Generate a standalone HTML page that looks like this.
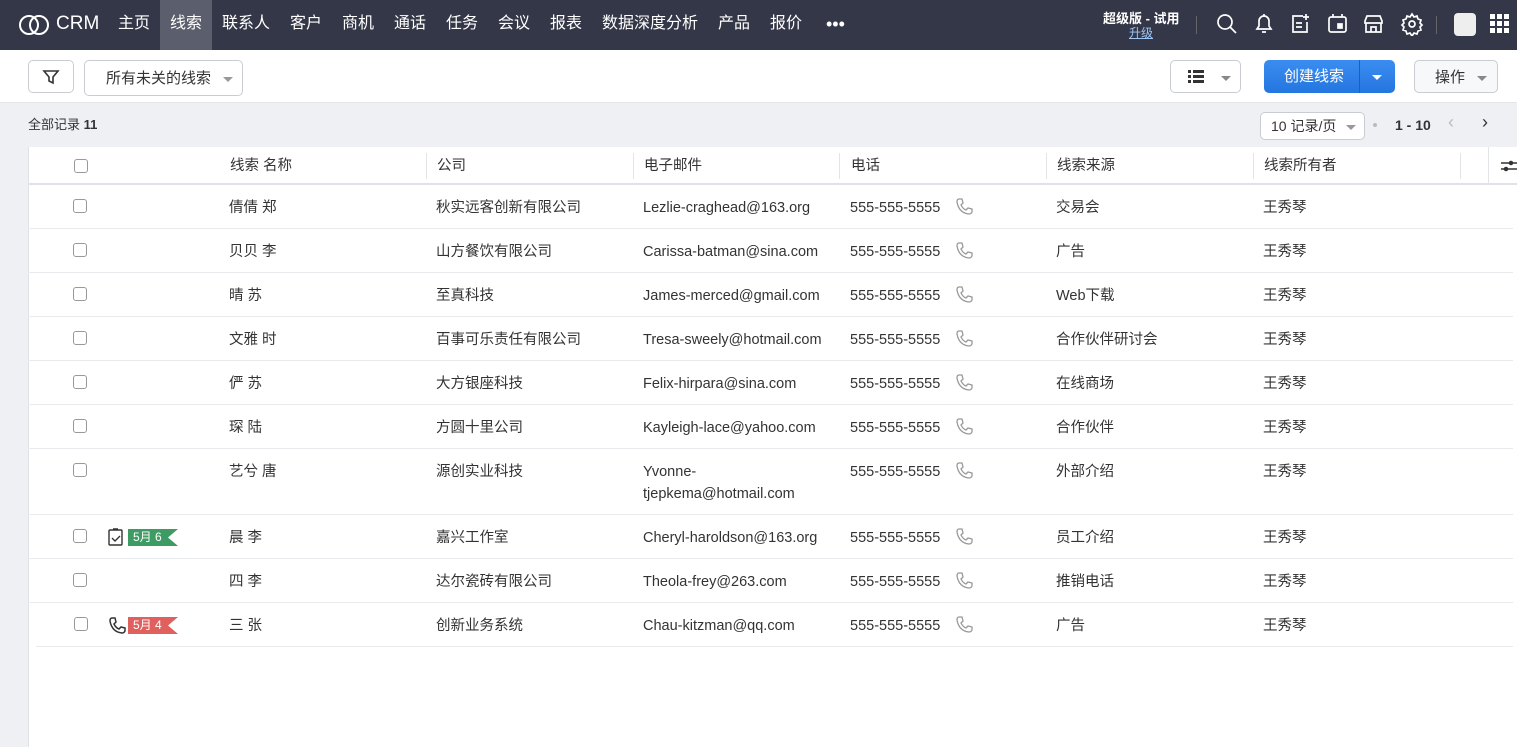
<!DOCTYPE html>
<html><head><meta charset="utf-8"><style>
*{box-sizing:border-box;margin:0;padding:0}
body{width:1517px;height:743px;overflow:hidden;background:#eef0f3;font-family:"Liberation Sans","Noto Sans CJK SC",sans-serif;color:#333;font-size:14px;position:relative}
.top{position:absolute;left:0;top:0;width:1517px;height:50px;background:#343747;color:#fff}
.nav{position:absolute;top:0;height:50px;line-height:48px;font-size:16px}
.abs{position:absolute}
.tb{position:absolute;left:0;top:50px;width:1517px;height:53px;background:#fff;border-bottom:1px solid #e3e5e8}
.btn{position:absolute;border:1px solid #c9ccd1;border-radius:5px;background:#fff}
.caret{position:absolute;width:0;height:0;border-left:5px solid transparent;border-right:5px solid transparent;border-top:5px solid #777}
.card{position:absolute;left:28px;top:147px;width:1489px;height:600px;background:#fff;border-left:1px solid #e0e2e6}
.row{position:absolute;left:0;width:1485px;border-bottom:1px solid #e8eaed}
.cb{position:absolute;left:45px;width:14px;height:14px;border:1.5px solid #999;border-radius:3px}
.c{position:absolute;font-size:14.5px;color:#333;white-space:nowrap;line-height:22px}
.hd{position:absolute;top:0;left:0;width:1489px;height:38px;border-bottom:2px solid #dfe2e6}
.sep{position:absolute;top:6px;width:1px;height:26px;background:#e2e4e8}
.tag{position:absolute;height:17px;line-height:17px;color:#fff;font-size:12px;padding-left:5px;width:50px}
</style></head><body>
<div class="top">
<svg class="abs" style="left:18px;top:13px" width="32" height="24" viewBox="0 0 32 24"><g fill="none" stroke="#fff" stroke-width="2"><circle cx="11" cy="12" r="9"/><circle cx="21" cy="12" r="9"/></g></svg>
<div class="nav" style="left:56px;font-size:19px">CRM</div>
<div class="abs" style="left:160px;top:0;width:52px;height:50px;background:#5b5e6c"></div>
<div class="nav" style="left:118px">主页</div>
<div class="nav" style="left:170px">线索</div>
<div class="nav" style="left:222px">联系人</div>
<div class="nav" style="left:290px">客户</div>
<div class="nav" style="left:342px">商机</div>
<div class="nav" style="left:394px">通话</div>
<div class="nav" style="left:446px">任务</div>
<div class="nav" style="left:498px">会议</div>
<div class="nav" style="left:550px">报表</div>
<div class="nav" style="left:602px">数据深度分析</div>
<div class="nav" style="left:718px">产品</div>
<div class="nav" style="left:770px">报价</div>
<div class="nav" style="left:826px;font-size:18px">•••</div>
<div class="abs" style="left:1103px;top:8px;font-size:13px;font-weight:bold">超级版 - 试用</div>
<div class="abs" style="left:1129px;top:24px;font-size:12px;color:#9cc5f5;text-decoration:underline">升级</div>
<div class="abs" style="left:1196px;top:16px;width:1px;height:18px;background:#666"></div>
<svg class="abs" style="left:1215px;top:12px" width="24" height="24" fill="none" stroke="#fff" stroke-width="1.7"><circle cx="10" cy="10" r="7"/><path d="M15 15l6 6"/></svg>
<svg class="abs" style="left:1253px;top:12px" width="22" height="24" fill="none" stroke="#fff" stroke-width="1.7"><path d="M4 17h14l-2-3v-5a5 5 0 0 0-10 0v5z M9 20h4 M11 2v2"/></svg>
<svg class="abs" style="left:1289px;top:12px" width="24" height="24" fill="none" stroke="#fff" stroke-width="1.7"><path d="M14 4H4v16h14V10 M7 11h6 M7 15h6 M17 2v6 M14 5h6"/></svg>
<svg class="abs" style="left:1326px;top:12px" width="24" height="24" fill="none" stroke="#fff" stroke-width="1.7"><rect x="3" y="5" width="17" height="15" rx="2"/><path d="M7 2v3 M16 2v3"/><rect x="12" y="12" width="4" height="4" fill="#fff"/></svg>
<svg class="abs" style="left:1362px;top:12px" width="24" height="24" fill="none" stroke="#fff" stroke-width="1.7"><path d="M3 9l2-5h13l2 5v2H3z M4 11v9h15v-9 M9 20v-5h5v5"/></svg>
<svg class="abs" style="left:1400px;top:12px" width="24" height="24" fill="none" stroke="#fff" stroke-width="1.7"><circle cx="12" cy="12" r="3"/><path d="M12 2l2 3 3-1 1 3 3 1-1 3 2 2-2 2 1 3-3 1-1 3-3-1-2 3-2-3-3 1-1-3-3-1 1-3-2-2 2-2-1-3 3-1 1-3 3 1z"/></svg>
<div class="abs" style="left:1436px;top:16px;width:1px;height:18px;background:#666"></div>
<div class="abs" style="left:1454px;top:13px;width:22px;height:23px;background:#eee;border-radius:4px"></div>
<svg class="abs" style="left:1490px;top:14px" width="20" height="20" fill="#fff"><rect x="0" y="0" width="5" height="5"/><rect x="7" y="0" width="5" height="5"/><rect x="14" y="0" width="5" height="5"/><rect x="0" y="7" width="5" height="5"/><rect x="7" y="7" width="5" height="5"/><rect x="14" y="7" width="5" height="5"/><rect x="0" y="14" width="5" height="5"/><rect x="7" y="14" width="5" height="5"/><rect x="14" y="14" width="5" height="5"/></svg>
</div>
<div class="tb">
<div class="btn" style="left:28px;top:10px;width:46px;height:33px"><svg class="abs" style="left:13px;top:8px" width="18" height="16" fill="none" stroke="#333" stroke-width="1.6"><path d="M2 2h14l-5 6v6l-4-2V8z"/></svg></div>
<div class="btn" style="left:84px;top:10px;width:159px;height:36px"><span class="abs" style="left:21px;top:7px;font-size:15px;line-height:22px">所有未关的线索</span><div class="caret" style="left:138px;top:16px;border-top-color:#999"></div></div>
<div class="btn" style="left:1170px;top:10px;width:71px;height:33px"><svg class="abs" style="left:17px;top:9px" width="16" height="13" fill="#333"><rect x="0" y="0" width="3" height="3"/><rect x="5" y="0" width="11" height="3"/><rect x="0" y="5" width="3" height="3"/><rect x="5" y="5" width="11" height="3"/><rect x="0" y="10" width="3" height="3"/><rect x="5" y="10" width="11" height="3"/></svg><div class="caret" style="left:50px;top:15px;border-top-color:#888"></div></div>
<div class="abs" style="left:1264px;top:10px;width:131px;height:33px;background:linear-gradient(#3a8df0,#2476e0);border-radius:5px;color:#fff"><span class="abs" style="left:20px;top:6px;font-size:15px;line-height:22px">创建线索</span><div class="abs" style="left:95px;top:0;width:1px;height:33px;background:#1b5fb8"></div><div class="caret" style="left:108px;top:15px;border-top-color:#fff"></div></div>
<div class="btn" style="left:1414px;top:10px;width:84px;height:33px;background:#f7f8f9"><span class="abs" style="left:20px;top:6px;font-size:15px;line-height:22px">操作</span><div class="caret" style="left:62px;top:15px;border-top-color:#888"></div></div>
</div>
<div class="abs" style="left:28px;top:115px;font-size:13px;line-height:20px">全部记录 <b>11</b></div>
<div class="btn" style="left:1260px;top:112px;width:105px;height:28px"><span class="abs" style="left:10px;top:3px;font-size:14px;line-height:20px">10 记录/页</span><div class="caret" style="left:85px;top:12px;border-top-color:#999"></div></div>
<div class="abs" style="left:1373px;top:123px;width:4px;height:4px;border-radius:2px;background:#bbb"></div>
<div class="abs" style="left:1395px;top:115px;font-size:14px;font-weight:bold;line-height:20px">1 - 10</div>
<div class="abs" style="left:1448px;top:112px;color:#bbb;font-size:18px">&lsaquo;</div>
<div class="abs" style="left:1482px;top:112px;color:#333;font-size:18px">&rsaquo;</div>
<div class="card">
<div class="hd">
<div class="cb" style="top:12px"></div>
<div class="c" style="left:201px;top:8px">线索 名称</div>
<div class="sep" style="left:397px"></div><div class="c" style="left:408px;top:8px">公司</div>
<div class="sep" style="left:604px"></div><div class="c" style="left:615px;top:8px">电子邮件</div>
<div class="sep" style="left:810px"></div><div class="c" style="left:822px;top:8px">电话</div>
<div class="sep" style="left:1017px"></div><div class="c" style="left:1028px;top:8px">线索来源</div>
<div class="sep" style="left:1224px"></div><div class="c" style="left:1235px;top:8px">线索所有者</div>
<div class="sep" style="left:1431px"></div>
<div class="abs" style="left:1459px;top:0;width:1px;height:38px;background:#e2e4e8"></div>
<svg class="abs" style="left:1472px;top:13px" width="16" height="12" stroke="#333" stroke-width="1.5"><path d="M0 3h16 M0 9h16"/><circle cx="10" cy="3" r="1.5" fill="#333"/><circle cx="5" cy="9" r="1.5" fill="#333"/></svg>
</div>
</div>
<div id="rows"></div>
<script>
var d=[["倩倩 郑","秋实远客创新有限公司","Lezlie-craghead@163.org","交易会"],["贝贝 李","山方餐饮有限公司","Carissa-batman@sina.com","广告"],["晴 苏","至真科技","James-merced@gmail.com","Web下载"],["文雅 时","百事可乐责任有限公司","Tresa-sweely@hotmail.com","合作伙伴研讨会"],["俨 苏","大方银座科技","Felix-hirpara@sina.com","在线商场"],["琛 陆","方圆十里公司","Kayleigh-lace@yahoo.com","合作伙伴"],["艺兮 唐","源创实业科技","Yvonne-<br>tjepkema@hotmail.com","外部介绍"],["晨 李","嘉兴工作室","Cheryl-haroldson@163.org","员工介绍"],["四 李","达尔瓷砖有限公司","Theola-frey@263.com","推销电话"],["三 张","创新业务系统","Chau-kitzman@qq.com","广告"]];
var h='',y=185;
for(var i=0;i<10;i++){var r=d[i],hh=i==6?66:44;
h+='<div class="row" style="left:28px;top:'+y+'px;height:'+hh+'px'+(i==9?';left:36px;width:1477px':'')+'">';
h+='<div class="cb" style="left:'+(i==9?38:45)+'px;top:14px"></div>';
var o=i==9?-8:0,t=12;
h+='<div class="c" style="left:'+(201+o)+'px;top:'+t+'px">'+r[0]+'</div><div class="c" style="left:'+(408+o)+'px;top:'+t+'px">'+r[1]+'</div><div class="c" style="left:'+(615+o)+'px;top:'+t+'px">'+r[2]+'</div><div class="c" style="left:'+(822+o)+'px;top:'+t+'px">555-555-5555</div>';
h+='<svg class="abs" style="left:'+(927+o)+'px;top:12px" width="18" height="18" fill="none" stroke="#999" stroke-width="1.3"><path d="M4 2l3 0 1 4-2 2q2 4 5 5l2-2 4 1v3q-1 2-3 2Q4 16 2 5q0-3 2-3z"/></svg>';
h+='<div class="c" style="left:'+(1028+o)+'px;top:'+t+'px">'+r[3]+'</div><div class="c" style="left:'+(1235+o)+'px;top:'+t+'px">王秀琴</div>';
if(i==7)h+='<svg class="abs" style="left:80px;top:13px" width="16" height="18" fill="none" stroke="#333" stroke-width="1.4"><rect x="1" y="2" width="13" height="15" rx="1"/><path d="M5 1h5 M4 10l3 3 5-5"/></svg><div class="tag" style="left:100px;top:14px;background:#3d9b63;clip-path:polygon(0 0,100% 0,80% 50%,100% 100%,0 100%)">5月 6</div>';
if(i==9)h+='<svg class="abs" style="left:72px;top:13px" width="18" height="18" fill="none" stroke="#333" stroke-width="1.5"><path d="M4 2l3 0 1 4-2 2q2 4 5 5l2-2 4 1v3q-1 2-3 2Q4 16 2 5q0-3 2-3z"/></svg><div class="tag" style="left:92px;top:14px;background:#e0605e;clip-path:polygon(0 0,100% 0,80% 50%,100% 100%,0 100%)">5月 4</div>';
h+='</div>';y+=hh;}
document.getElementById('rows').innerHTML=h;
</script>
</body></html>
